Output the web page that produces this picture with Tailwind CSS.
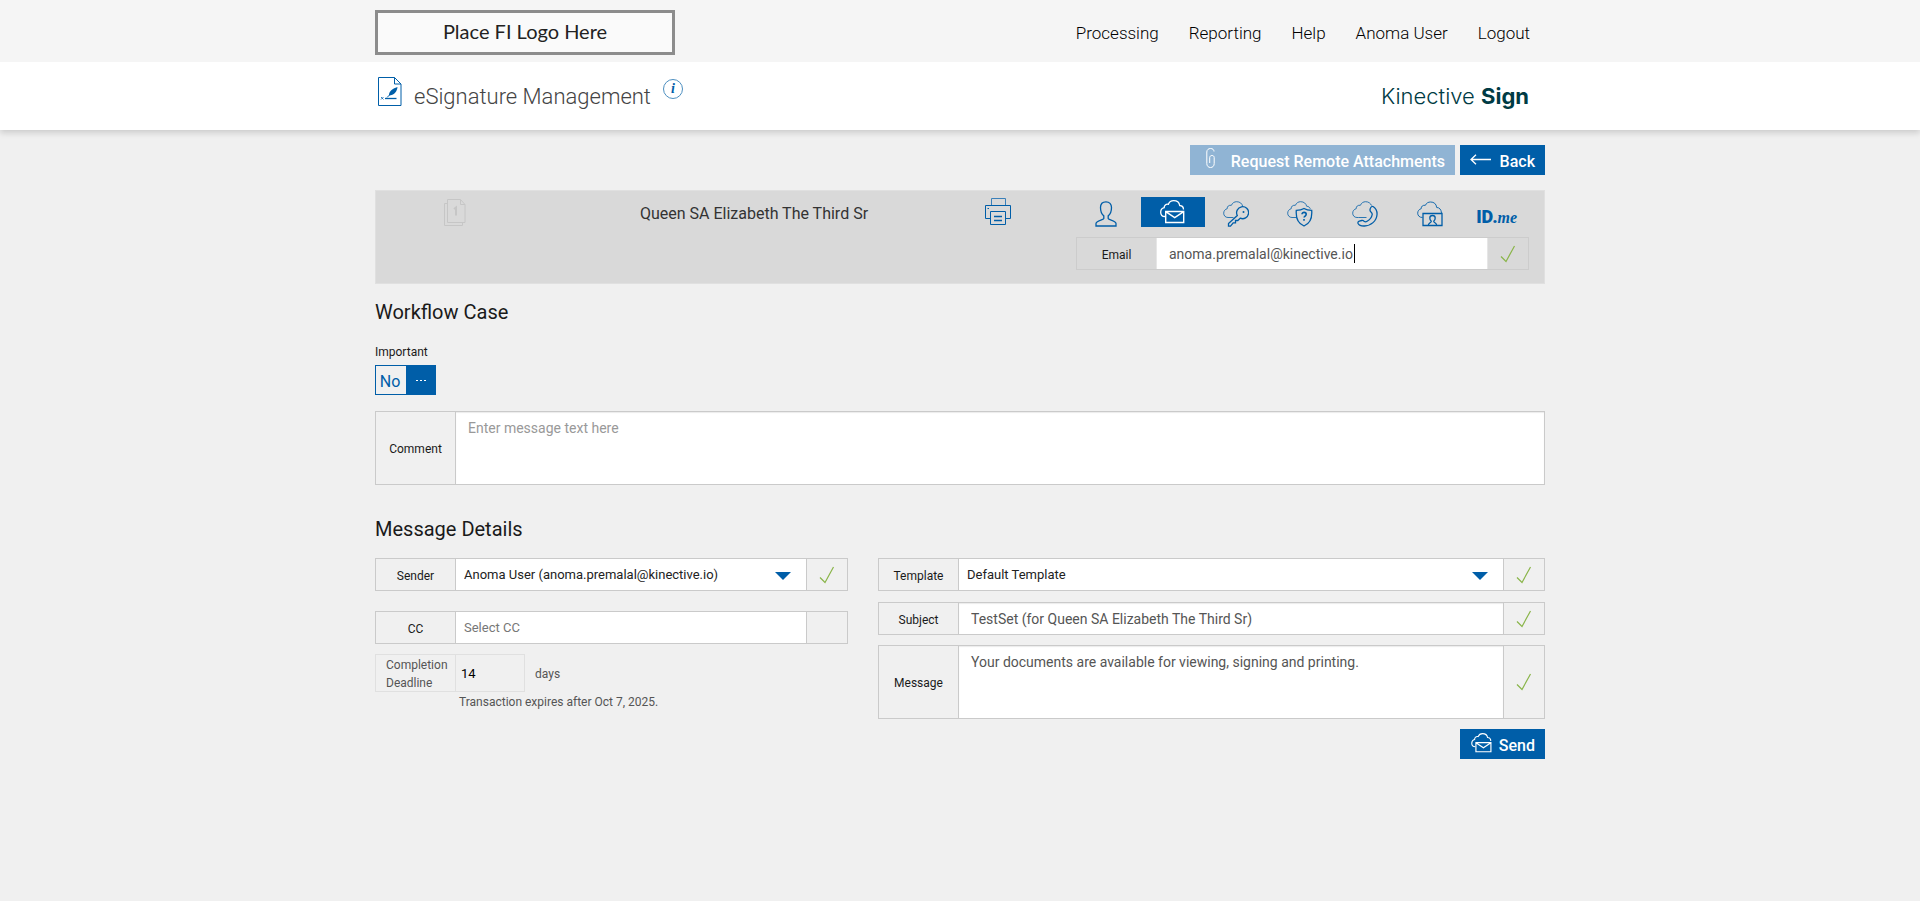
<!DOCTYPE html>
<html lang="en">
<head>
    <meta charset="UTF-8">
    <meta name="viewport" content="width=device-width, initial-scale=1.0">
    <title>eSignature Management</title>
    <script src="https://cdn.jsdelivr.net/npm/@tailwindcss/browser@4"></script>
</head>
<body class="min-h-screen bg-[#f0f0f0] font-['Roboto',sans-serif] text-sm text-[#1a1a1a]">

    <!-- shared icons -->
    <svg class="hidden">
        <symbol id="mail" viewBox="0 0 26 24">
            <path d="M5 16.500C2.300 16.500.7 14.500.7 12.200.7 9.900 2.200 8.200 4.200 7.700 4 5.400 6 3.800 8.400 4.300 9.300 1.900 11.400.7 13.600.7 16.900.7 19.300 2.800 19.700 5.500 22 5.700 23.500 7.300 23.500 9.500" fill="none" stroke="currentColor" stroke-width="1.300"/>
            <path d="M5.700 11.500h18v11h-18zM5.700 11.700l9 6 9-6" fill="none" stroke="currentColor" stroke-width="1.400"/>
        </symbol>
        <symbol id="check" viewBox="0 0 16 18">
            <path d="M1 11.500l5 5L14.500 1" fill="none" stroke="#8ab54a" stroke-width="1.200"/>
        </symbol>
    </svg>

    <header class="relative bg-[#f5f5f5]">
        <div class="mx-auto flex h-[62px] max-w-[1170px] items-center justify-between pt-[3px]">
            <div class="flex h-[45px] w-[300px] items-center justify-center border-3 border-[#8c8c8c] bg-[#fafafa] pb-1 font-['Lato',sans-serif] text-xl text-[#222]">Place FI Logo Here</div>
            <nav class="flex gap-[30px] pt-px pr-[15px] text-[17px] font-light text-black">
                <a href="#">Processing</a>
                <a href="#">Reporting</a>
                <a href="#">Help</a>
                <a href="#">Anoma User</a>
                <a href="#">Logout</a>
            </nav>
        </div>
    </header>

    <div class="bg-white shadow-[0_3px_6px_rgba(0,0,0,0.15)]">
        <div class="mx-auto flex h-[68px] max-w-[1170px] items-center justify-between">
            <div class="flex items-start pb-[2px]">
                <svg class="ml-[3px] h-[30px] w-6" viewBox="0 0 24 30" fill="none" stroke="#005ea8">
                    <path d="M.5.5h16l6.500 6.500v21.500H.500zM16.500.5V7H23"/>
                    <path d="M3 20l2.500 2.500M5.500 20L3 22.500" stroke-width=".8"/>
                    <path d="M7 21.500h11.500" stroke-width="1.300"/>
                    <path d="M9 20.500l3-3" />
                    <path d="M11 18.500c-.5-3.500 3-7 8.500-8.500-.5 5-3.500 8-8.500 8.500z" fill="#005ea8" stroke="none"/>
                </svg>
                <h1 class="ml-3 pt-1 text-[22px] leading-8 font-light text-[#444]">eSignature Management</h1>
                <button type="button" aria-label="About this page" class="ml-3 mt-[2px] flex size-5 items-center justify-center rounded-full border border-[#4d8fc0] font-['Liberation_Serif',serif] text-sm font-bold text-[#005ea8] italic">i</button>
            </div>
            <div class="pt-[2px] pr-4 font-['Inter',sans-serif] text-[22px] font-light text-[#003b44]">Kinective <b class="font-bold">Sign</b></div>
        </div>
    </div>

    <main class="mx-auto max-w-[1170px]">
        <div class="flex justify-end gap-[5px] pt-[15px] pb-[15px] text-base font-medium text-white">
            <button type="button" disabled class="flex h-[30px] w-[265px] items-center justify-end bg-[#90b4d4] pr-[10px]">
                <svg class="mr-4 mb-1 h-5 w-[9px] shrink-0" viewBox="0 0 9 20" fill="none" stroke="#fff">
                    <path d="M8 3.500C8 1.500 6.500.5 4.500.5S.8 1.800.8 4v11.500c0 2.500 1.500 4 3.700 4s3.700-1.500 3.700-4v-6C8.200 8.300 7.300 7.500 6 7.500S3.700 8.300 3.700 9.500V15"/>
                </svg>
                <span class="pt-1">Request Remote Attachments</span>
            </button>
            <button type="button" class="flex h-[30px] w-[85px] items-center justify-end bg-[#005ea8] pr-[10px]">
                <svg class="mr-[9px] mb-[2px] h-[11px] w-[21px]" viewBox="0 0 21 11" fill="none" stroke="#fff" stroke-width="1.300">
                    <path d="M21 5.500H1M6 .8L1 5.500l5 4.700"/>
                </svg>
                <span class="pt-1">Back</span>
            </button>
        </div>

        <!-- signer -->
        <section class="flex h-[94px] border border-[#e0e0e0] bg-[#d9d9d9] pr-[15px]">
            <div class="flex w-[158px] justify-center pt-2">
                <svg class="h-7 w-[22px]" viewBox="0 0 22 28" fill="none" stroke="#c6c6c6">
                    <path d="M3.500.5h13l4.500 5v18H3.500zM16.500.5v5H21M3.500 4.500h-3v22h18v-3"/>
                    <path d="M10 10l2-1.500v8" stroke-width="2"/>
                </svg>
            </div>
            <div class="flex-1 pt-[11px] text-center text-base text-[#333]">Queen SA Elizabeth The Third Sr</div>
            <div class="w-12 pt-[7px]">
                <button type="button" aria-label="Print" class="mx-auto block text-[#005ea8]">
                    <svg class="h-7 w-[26px]" viewBox="0 0 26 28" fill="none" stroke="currentColor">
                        <path d="M6.500 8V.5h14V8" stroke="#3b80b9"/>
                        <path d="M5.500 20.500h-5v-13h25v13h-5M2.500 10.500h1.500"/>
                        <path d="M5.500 13.500h15v13h-15z"/>
                        <path d="M9 18.500h8M9 22.500h8" stroke-width="1.500"/>
                    </svg>
                </button>
            </div>
            <div class="ml-[54px] w-[453px] pt-[6px]">
                <div class="grid grid-cols-7 grid-rows-[30px] text-[#005ea8]">
                    <button type="button" aria-label="In person" class="flex items-center justify-center pt-1 pr-1">
                        <svg class="h-[26px] w-[22px]" viewBox="0 0 22 26" fill="none" stroke="currentColor" stroke-width="1.300">
                            <path d="M11 .8c-3.400 0-5.500 2.300-5.500 5.800 0 4 1.500 7 3.300 8.300v2.600c-.5 1.500-7.800 2-7.800 5V25h20v-2.500c0-3-7.300-3.500-7.800-5v-2.600c1.800-1.300 3.300-4.300 3.300-8.300C16.500 3.100 14.400.8 11 .8z"/>
                        </svg>
                    </button>
                    <button type="button" aria-label="Email" class="flex items-center justify-center bg-[#005ea8] text-white">
                        <svg class="h-6 w-[26px]"><use href="#mail"/></svg>
                    </button>
                    <button type="button" aria-label="Access code" class="flex items-center justify-center pt-1 pr-1">
                        <svg class="size-[26px]" viewBox="0 0 26 26" fill="none" stroke="currentColor" stroke-width="1.300">
                            <path d="M10.500 16.500H5C2.300 16.500.7 14.500.7 12.200.7 9.900 2.200 8.200 4.200 7.700 4 5.400 6 3.800 8.400 4.300 9.300 1.900 11.400.7 13.600.7 16.900.7 19 2.500 19.700 5.300" stroke-width=".8"/>
                            <path d="M14.300 14.500A6 6 0 1 1 17.200 17.200L14.800 19.500h-2.300v2.300h-2.300l-2.700 3.400H5.500v-2.700z"/>
                            <circle cx="20.500" cy="11" r="1" fill="currentColor" stroke="none"/>
                        </svg>
                    </button>
                    <button type="button" aria-label="Security question" class="flex items-center justify-center pt-1 pr-1">
                        <svg class="size-[26px]" viewBox="0 0 26 26" fill="none" stroke="currentColor" stroke-width="1.300">
                            <path d="M9 16.500H5C2.300 16.500.7 14.500.7 12.200.7 9.900 2.200 8.200 4.200 7.700 4 5.400 6 3.800 8.400 4.300 9.300 1.900 11.400.7 13.600.7 16.900.7 19 2.500 19.700 5.300 21.500 5.300 22.800 6.300 23.300 7.800" stroke-width=".8"/>
                            <path d="M17 7.500c-2.200 1.400-4.800 1.900-7.700 1.900-.6 7.400 1.700 13.100 7.700 15.600 6-2.500 8.300-8.200 7.700-15.600-2.900 0-5.500-.5-7.700-1.900z"/>
                            <path d="M15 13.300c0-2.600 4.200-2.500 4.200 0 0 1.700-2.100 1.700-2.100 3.300M17 18v1.700" stroke-width="1.600"/>
                        </svg>
                    </button>
                    <button type="button" aria-label="Phone" class="flex items-center justify-center pt-1 pr-1">
                        <svg class="size-[26px]" viewBox="0 0 26 26" fill="none" stroke="currentColor" stroke-width="1.300">
                            <path d="M6.500 16.500H5C2.300 16.500.7 14.500.7 12.200.7 9.900 2.200 8.200 4.200 7.700 4 5.400 6 3.800 8.400 4.300 9.300 1.900 11.400.7 13.600.7 16.500.7 18.500 2.200 19.500 4.500M6.500 16.500h8" stroke-width=".8"/>
                            <path d="M18.800 6.500c.6-1 1.700-1.400 2.600-.8 2.300 1.600 3.900 4.500 3.600 8-.5 6.300-6 11.100-12.600 11.300-3 .1-5.500-.8-6.300-2.500-.4-1.100 0-2 1.200-2.400l2.500-.6c1-.2 1.700.2 2.300.8.900.7 1.900.7 3 0 3-1.800 4.700-4.100 5.100-6.800.1-1-.2-1.500-1-2.200-1.400-1.200-1.500-3-.4-4.800z"/>
                        </svg>
                    </button>
                    <button type="button" aria-label="Photo ID" class="flex items-center justify-center pt-1 pr-1">
                        <svg class="size-[26px]" viewBox="0 0 26 26" fill="none" stroke="currentColor" stroke-width="1.300">
                            <path d="M5.500 16.500C2.300 16.500.7 14.500.7 12.200.7 9.900 2.200 8.200 4.200 7.700 4 5.400 6 3.800 8.400 4.300 9.300 1.900 11.400 1 13.600 1 16.900 1 19.300 2.800 19.700 6.500 22.500 6.500 24.200 8.500 24.500 12" stroke-width=".9"/>
                            <path d="M6 12.500h19v12H6z"/>
                            <path d="M15.500 14.500c-1.500 0-2.700 1-2.700 2.500s.7 2.700 1.500 3.200c0 1.800-3 1.500-3 4.300M15.500 14.500c1.500 0 2.700 1 2.700 2.500s-.7 2.700-1.500 3.200c0 1.800 3 1.500 3 4.300"/>
                        </svg>
                    </button>
                    <button type="button" class="flex items-baseline justify-center pt-2 text-base leading-6"><b class="text-lg leading-6 font-black">ID.</b><i class="font-['Liberation_Serif',serif] font-bold">me</i></button>
                </div>
                <div class="mt-[10px] flex h-[33px] border border-[#cccccc]">
                    <label for="email" class="flex w-[79px] items-center justify-center pt-[2px] text-xs">Email</label>
                    <div class="relative flex-1 border-x border-[#e6e6e6] bg-white">
                        <input id="email" type="email" value="anoma.premalal@kinective.io" class="h-full w-full px-3 text-sm text-[#555] outline-none">
                        <span class="absolute top-[6px] left-[197px] h-[19px] w-px bg-black"></span>
                    </div>
                    <div class="flex w-10 items-center justify-center"><svg class="h-[18px] w-4"><use href="#check"/></svg></div>
                </div>
            </div>
        </section>

        <!-- workflow case -->
        <section>
            <h2 class="pt-[14px] text-xl leading-7">Workflow Case</h2>
            <div class="pt-[17px] pb-1 text-xs leading-[18px]">Important</div>
            <button type="button" class="flex h-[30px] w-[61px] border border-[#005ea8] text-[#005ea8]">
                <span class="flex h-full w-[30px] items-center justify-center pt-1 pr-[2px] text-base">No</span>
                <span class="flex h-full flex-1 items-center justify-center gap-[2px] bg-[#005ea8]">
                    <i class="h-px w-[2px] bg-white"></i><i class="h-px w-[2px] bg-white"></i><i class="h-px w-[2px] bg-white"></i>
                </span>
            </button>
            <div class="mt-4 flex h-[74px] border border-[#cacaca]">
                <label for="comment" class="flex w-20 items-center justify-center border-r border-[#cacaca] pt-[2px] text-xs">Comment</label>
                <textarea id="comment" placeholder="Enter message text here" class="flex-1 resize-none bg-white px-3 py-[6px] text-sm text-[#555] shadow-[inset_0_1px_1px_rgba(0,0,0,0.08)] outline-none placeholder:text-[#999]"></textarea>
            </div>
        </section>

        <section>
            <h2 class="pt-[30px] pb-[15px] text-xl leading-7">Message Details</h2>
            <div class="grid grid-cols-[473fr_667fr] gap-[30px]">
                <div>
                    <div class="flex h-[33px] border border-[#cacaca]">
                        <label for="sender" class="flex w-20 items-center justify-center border-r border-[#cacaca] pt-[2px] text-xs">Sender</label>
                        <div class="relative flex-1 bg-white">
                            <select id="sender" class="h-full w-full appearance-none px-2 pt-px text-[13px] text-[#222] outline-none">
                                <option>Anoma User (anoma.premalal@kinective.io)</option>
                            </select>
                            <svg class="pointer-events-none absolute top-[13px] right-[15px] h-2 w-4" viewBox="0 0 16 8"><path d="M0 0h16L8 8z" fill="#005ea8"/></svg>
                        </div>
                        <div class="flex w-[41px] items-center justify-center border-l border-[#cacaca]"><svg class="h-[18px] w-4"><use href="#check"/></svg></div>
                    </div>
                    <div class="mt-5 flex h-[33px] border border-[#cacaca]">
                        <label for="cc" class="flex w-20 items-center justify-center border-r border-[#cacaca] pt-[2px] text-xs">CC</label>
                        <input id="cc" type="text" placeholder="Select CC" class="min-w-0 flex-1 bg-white px-2 pt-px text-[13px] outline-none placeholder:text-[#777]">
                        <div class="w-[41px] border-l border-[#cacaca]"></div>
                    </div>
                    <div class="mt-[10px] flex items-center text-xs text-[#555]">
                        <div class="flex h-[38px] w-[150px] border border-[#e0e0e0]">
                            <label for="deadline" class="w-20 border-r border-[#e0e0e0] pt-px pl-[10px] leading-[18px]">Completion Deadline</label>
                            <input id="deadline" type="text" value="14" class="min-w-0 flex-1 px-[5px] pt-[2px] text-[13px] text-black outline-none">
                        </div>
                        <span class="ml-[10px] pt-[2px]">days</span>
                    </div>
                    <p class="pl-[84px] text-xs leading-5 text-[#555]">Transaction expires after Oct 7, 2025.</p>
                </div>
                <div>
                    <div class="flex h-[33px] border border-[#cacaca]">
                        <label for="template" class="flex w-20 items-center justify-center border-r border-[#cacaca] pt-[2px] text-xs">Template</label>
                        <div class="relative flex-1 bg-white">
                            <select id="template" class="h-full w-full appearance-none px-2 pt-px text-[13px] text-[#222] outline-none">
                                <option>Default Template</option>
                            </select>
                            <svg class="pointer-events-none absolute top-[13px] right-[15px] h-2 w-4" viewBox="0 0 16 8"><path d="M0 0h16L8 8z" fill="#005ea8"/></svg>
                        </div>
                        <div class="flex w-[41px] items-center justify-center border-l border-[#cacaca]"><svg class="h-[18px] w-4"><use href="#check"/></svg></div>
                    </div>
                    <div class="mt-[11px] flex h-[33px] border border-[#cacaca]">
                        <label for="subject" class="flex w-20 items-center justify-center border-r border-[#cacaca] pt-[2px] text-xs">Subject</label>
                        <input id="subject" type="text" value="TestSet (for Queen SA Elizabeth The Third Sr)" class="min-w-0 flex-1 bg-white px-3 text-sm text-[#555] shadow-[inset_0_1px_1px_rgba(0,0,0,0.08)] outline-none">
                        <div class="flex w-[41px] items-center justify-center border-l border-[#cacaca]"><svg class="h-[18px] w-4"><use href="#check"/></svg></div>
                    </div>
                    <div class="mt-[10px] flex h-[74px] border border-[#cacaca]">
                        <label for="message" class="flex w-20 items-center justify-center border-r border-[#cacaca] pt-[2px] text-xs">Message</label>
                        <textarea id="message" class="min-w-0 flex-1 resize-none bg-white px-3 py-[6px] text-sm text-[#555] shadow-[inset_0_1px_1px_rgba(0,0,0,0.08)] outline-none">Your documents are available for viewing, signing and printing.</textarea>
                        <div class="flex w-[41px] items-center justify-center border-l border-[#cacaca]"><svg class="h-[18px] w-4"><use href="#check"/></svg></div>
                    </div>
                    <button type="submit" class="mt-[10px] ml-auto flex h-[30px] w-[85px] items-center justify-end bg-[#005ea8] pr-[10px] text-base font-medium text-white">
                        <svg class="mr-[6px] mb-[2px] h-5 w-[22px]"><use href="#mail"/></svg>
                        <span class="pt-1">Send</span>
                    </button>
                </div>
            </div>
        </section>
    </main>
</body>
</html>
